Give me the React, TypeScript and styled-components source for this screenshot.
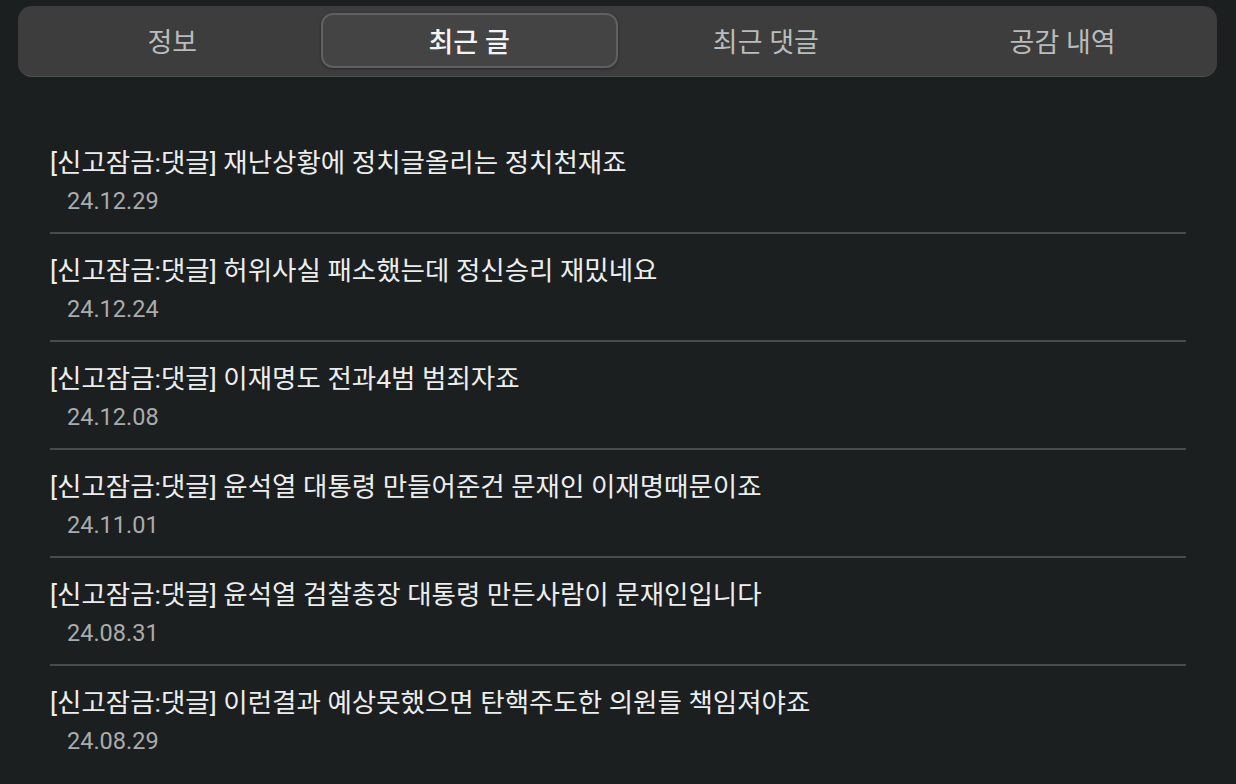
import React from "react";
import styled, { createGlobalStyle } from "styled-components";

const GlobalStyle = createGlobalStyle`
  html, body {
    margin: 0;
    padding: 0;
    background: #1c1f20;
  }
  body {
    font-family: Roboto, "Noto Sans CJK KR", "Noto Sans", sans-serif;
    -webkit-font-smoothing: antialiased;
  }
`;

const Page = styled.div`
  width: 1236px;
  height: 784px;
  overflow: hidden;
  background: #1c1f20;
  padding: 6px 19px 0 18px;
  box-sizing: border-box;
`;

const TabBar = styled.div`
  display: grid;
  grid-template-columns: repeat(4, 1fr);
  padding: 7px 6px 8px 6px;
  background: #3d3d3d;
  border-radius: 14px;
  border-bottom: 1px solid #4b5352;
`;

const Tab = styled.div<{ $active?: boolean }>`
  height: 55px;
  box-sizing: border-box;
  display: flex;
  align-items: center;
  justify-content: center;
  font-size: 27px;
  color: ${(p) => (p.$active ? "#f4f4f4" : "#b9bcbc")};
  font-weight: ${(p) => (p.$active ? 500 : 400)};
  background: ${(p) => (p.$active ? "#444444" : "transparent")};
  border: ${(p) => (p.$active ? "2px solid #5f6061" : "2px solid transparent")};
  border-radius: 12px;
  box-shadow: ${(p) => (p.$active ? "0 1px 3px rgba(0,0,0,0.35)" : "none")};
`;

const List = styled.ul`
  list-style: none;
  margin: 49px 31px 0 32px;
  padding: 0;
`;

const Row = styled.li`
  padding: 18px 0 12px;
  border-bottom: 2px solid #474c4d;
  &:last-child {
    border-bottom: none;
  }
`;

const Title = styled.div`
  font-size: 26.5px;
  line-height: 38px;
  color: #eceeee;
  white-space: nowrap;
`;

const DateText = styled.div`
  font-size: 23.5px;
  line-height: 38px;
  color: #a9acac;
  padding-left: 17px;
`;

const tabs = ["정보", "최근 글", "최근 댓글", "공감 내역"];

const posts = [
  { title: "[신고잠금:댓글] 재난상황에 정치글올리는 정치천재죠", date: "24.12.29" },
  { title: "[신고잠금:댓글] 허위사실 패소했는데 정신승리 재밌네요", date: "24.12.24" },
  { title: "[신고잠금:댓글] 이재명도 전과4범 범죄자죠", date: "24.12.08" },
  { title: "[신고잠금:댓글] 윤석열 대통령 만들어준건 문재인 이재명때문이죠", date: "24.11.01" },
  { title: "[신고잠금:댓글] 윤석열 검찰총장 대통령 만든사람이 문재인입니다", date: "24.08.31" },
  { title: "[신고잠금:댓글] 이런결과 예상못했으면 탄핵주도한 의원들 책임져야죠", date: "24.08.29" },
];

export default function App() {
  return (
    <>
      <GlobalStyle />
      <Page>
        <TabBar>
          {tabs.map((t, i) => (
            <Tab key={t} $active={i === 1}>
              {t}
            </Tab>
          ))}
        </TabBar>
        <List>
          {posts.map((p) => (
            <Row key={p.date + p.title}>
              <Title>{p.title}</Title>
              <DateText>{p.date}</DateText>
            </Row>
          ))}
        </List>
      </Page>
    </>
  );
}
